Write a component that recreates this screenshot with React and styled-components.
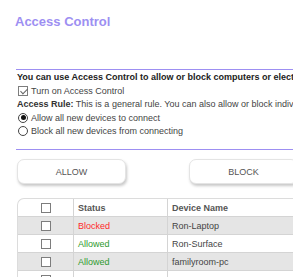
import styled, { createGlobalStyle } from "styled-components";

const GlobalStyle = createGlobalStyle`
  html, body {
    margin: 0;
    padding: 0;
    background: #fff;
  }
  body {
    font-family: "Liberation Sans", Arial, sans-serif;
    font-size: 9px;
    color: #333;
  }
`;

const devices = [
  { status: "Blocked", name: "Ron-Laptop" },
  { status: "Allowed", name: "Ron-Surface" },
  { status: "Allowed", name: "familyroom-pc" },
  { status: "", name: "" },
];

const App = () => {
  return (
    <>
      <GlobalStyle />
      <Page>
        <Title>Access Control</Title>
        <Section>
          <Lead>You can use Access Control to allow or block computers or electronic devices from accessing your network.</Lead>
          <Option>
            <Box checked />
            Turn on Access Control
          </Option>
          <Line>
            <b>Access Rule:</b> This is a general rule. You can also allow or block individual devices.
          </Line>
          <Option>
            <Radio checked />
            Allow all new devices to connect
          </Option>
          <Option>
            <Radio />
            Block all new devices from connecting
          </Option>
        </Section>
        <Buttons>
          <Button>ALLOW</Button>
          <Button>BLOCK</Button>
        </Buttons>
        <Table>
          <thead>
            <tr>
              <CheckCell>
                <Box />
              </CheckCell>
              <HeadCell $w="85px">Status</HeadCell>
              <HeadCell>Device Name</HeadCell>
            </tr>
          </thead>
          <tbody>
            {devices.map((d, i) => (
              <Row key={i} $odd={i % 2 === 0}>
                <CheckCell>
                  <Box />
                </CheckCell>
                <Cell $status={d.status}>{d.status}</Cell>
                <Cell>{d.name}</Cell>
              </Row>
            ))}
          </tbody>
        </Table>
      </Page>
    </>
  );
};

const Page = styled.div`
  width: 278px;
  height: 277px;
  margin-left: 15px;
  overflow: hidden;
  padding-top: 14px;
  box-sizing: border-box;
`;

const Title = styled.h1`
  margin: 0;
  font-size: 13px;
  line-height: 15px;
  font-weight: bold;
  color: #9d8ff2;
  height: 55px;
`;

const Section = styled.div`
  border-top: 1px solid #9d8ff2;
  border-bottom: 1px solid #9d8ff2;
  padding-bottom: 11px;
  margin-left: 1px;
`;

const Lead = styled.div`
  font-weight: bold;
  white-space: nowrap;
  line-height: 14px;
  margin-left: 1px;
  color: #222;
`;

const Line = styled.div`
  white-space: nowrap;
  line-height: 13.5px;
  color: #444;
  margin-left: 1px;
  b {
    color: #333;
  }
`;

const Option = styled.div`
  display: flex;
  align-items: center;
  gap: 3px;
  white-space: nowrap;
  height: 13.5px;
  color: #444;
  margin-left: 2px;
`;

const Box = styled.span`
  display: inline-block;
  box-sizing: border-box;
  width: 10px;
  height: 10px;
  border: 1px solid #7d7d7d;
  background: #fff;
  position: relative;
  &::after {
    content: "";
    display: ${(p) => (p.checked ? "block" : "none")};
    position: absolute;
    left: 2.5px;
    top: 0px;
    width: 3px;
    height: 6px;
    border: solid #666;
    border-width: 0 1px 1px 0;
    transform: rotate(45deg);
  }
`;

const Radio = styled.span`
  display: inline-block;
  box-sizing: border-box;
  width: 10px;
  height: 10px;
  border-radius: 50%;
  border: 1px solid #444;
  background: #fff;
  position: relative;
  &::after {
    content: "";
    display: ${(p) => (p.checked ? "block" : "none")};
    position: absolute;
    left: 1.5px;
    top: 1.5px;
    width: 5px;
    height: 5px;
    border-radius: 50%;
    background: #111;
  }
`;

const Buttons = styled.div`
  display: flex;
  gap: 63px;
  padding: 9px 0 0 2px;
  height: 27px;
  margin-bottom: 12px;
`;

const Button = styled.button`
  flex: 0 0 109px;
  height: 25px;
  border: 1px solid #e4e4e4;
  border-radius: 7px;
  background: #fff;
  box-shadow: 1px 2px 3px rgba(0, 0, 0, 0.22);
  font-family: "Liberation Sans", Arial, sans-serif;
  font-size: 9px;
  color: #555;
  padding: 0;
`;

const Table = styled.table`
  border-collapse: separate;
  border-spacing: 0;
  width: 300px;
  margin-left: 2px;
  border-top: 1px solid #dcdcdc;
  border-left: 1px solid #dcdcdc;
  border-top-left-radius: 7px;
  font-size: 9px;
`;

const CheckCell = styled.td`
  width: 55px;
  height: 17px;
  padding: 0;
  text-align: center;
  border-right: 1px solid #d4d4d4;
  border-bottom: 1px solid #d4d4d4;
  line-height: 0;
  vertical-align: middle;
`;

const HeadCell = styled.th`
  width: ${(p) => p.$w || "auto"};
  height: 17px;
  padding: 0 4px;
  text-align: left;
  font-weight: bold;
  color: #555;
  border-right: 1px solid #d4d4d4;
  border-bottom: 1px solid #d4d4d4;
`;

const Row = styled.tr`
  background: ${(p) => (p.$odd ? "#e5e5e5" : "#fff")};
`;

const Cell = styled.td`
  height: 17px;
  padding: 0 4px;
  white-space: nowrap;
  border-right: 1px solid #d4d4d4;
  border-bottom: 1px solid #d4d4d4;
  color: ${(p) =>
    p.$status === "Blocked" ? "#ff2a2a" : p.$status === "Allowed" ? "#2e9a2e" : "#444"};
`;

export default App;
